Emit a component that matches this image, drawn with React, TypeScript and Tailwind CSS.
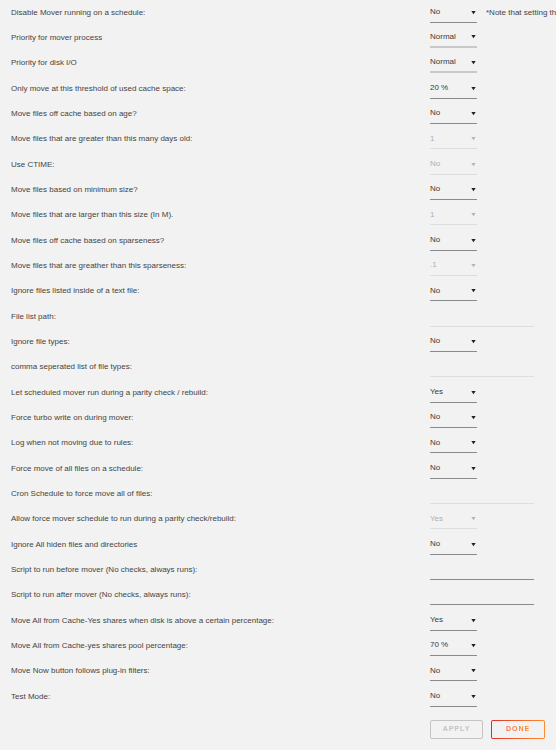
import React from "react";

type Row =
  | { label: string; kind: "select"; value: string; tone?: "dark" | "soft" | "off"; note?: string }
  | { label: string; kind: "input"; tone: "light" | "dark" };

const rows: Row[] = [
  { label: "Disable Mover running on a schedule:", kind: "select", value: "No", note: "*Note that setting this to Yes will stop the mover from running" },
  { label: "Priority for mover process", kind: "select", value: "Normal", tone: "soft" },
  { label: "Priority for disk I/O", kind: "select", value: "Normal", tone: "soft" },
  { label: "Only move at this threshold of used cache space:", kind: "select", value: "20 %" },
  { label: "Move files off cache based on age?", kind: "select", value: "No" },
  { label: "Move files that are greater than this many days old:", kind: "select", value: "1", tone: "off" },
  { label: "Use CTIME:", kind: "select", value: "No", tone: "off" },
  { label: "Move files based on minimum size?", kind: "select", value: "No" },
  { label: "Move files that are larger than this size (In M).", kind: "select", value: "1", tone: "off" },
  { label: "Move files off cache based on sparseness?", kind: "select", value: "No" },
  { label: "Move files that are greather than this sparseness:", kind: "select", value: ".1", tone: "off" },
  { label: "Ignore files listed inside of a text file:", kind: "select", value: "No" },
  { label: "File list path:", kind: "input", tone: "light" },
  { label: "Ignore file types:", kind: "select", value: "No" },
  { label: "comma seperated list of file types:", kind: "input", tone: "light" },
  { label: "Let scheduled mover run during a parity check / rebuild:", kind: "select", value: "Yes" },
  { label: "Force turbo write on during mover:", kind: "select", value: "No" },
  { label: "Log when not moving due to rules:", kind: "select", value: "No" },
  { label: "Force move of all files on a schedule:", kind: "select", value: "No" },
  { label: "Cron Schedule to force move all of files:", kind: "input", tone: "light" },
  { label: "Allow force mover schedule to run during a parity check/rebuild:", kind: "select", value: "Yes", tone: "off" },
  { label: "Ignore All hiden files and directories", kind: "select", value: "No" },
  { label: "Script to run before mover (No checks, always runs):", kind: "input", tone: "dark" },
  { label: "Script to run after mover (No checks, always runs):", kind: "input", tone: "dark" },
  { label: "Move All from Cache-Yes shares when disk is above a certain percentage:", kind: "select", value: "Yes" },
  { label: "Move All from Cache-yes shares pool percentage:", kind: "select", value: "70 %" },
  { label: "Move Now button follows plug-in filters:", kind: "select", value: "No" },
  { label: "Test Mode:", kind: "select", value: "No" },
];

const Caret = ({ off }: { off: boolean }) => (
  <svg width="5" height="5" viewBox="0 0 5 5" className="mr-[1px]">
    <path d="M0.3 1 L4.7 1 L2.5 4.3 Z" fill={off ? "#b5b5b5" : "#222"} />
  </svg>
);

function Select({ value, tone = "dark" }: { value: string; tone?: "dark" | "soft" | "off" }) {
  const off = tone === "off";
  const line =
    tone === "off"
      ? "border-b border-[#dedede]"
      : tone === "soft"
        ? "border-b-2 border-[#c9c9c9]"
        : "border-b border-[#8a8a8a]";
  return (
    <div className={`mt-[2px] flex h-[18px] w-[47px] items-center justify-between pb-[2px] ${line}`}>
      <span className={off ? "text-[#b0b0b0]" : "text-[#3a3a3a]"}>{value}</span>
      <Caret off={off} />
    </div>
  );
}

export default function App() {
  return (
    <div
      className="h-[750px] w-[556px] overflow-hidden bg-[#f2f2f2] text-[8px] text-[#444]"
      style={{ fontFamily: '"Liberation Sans", Arial, sans-serif' }}
    >
      <div className="flex flex-col">
        {rows.map((r) => (
          <div key={r.label} className="flex h-[25.33px] items-center">
            <div className="w-[430px] shrink-0 pl-[11px]">{r.label}</div>
            {r.kind === "select" ? (
              <div className="flex items-center">
                <Select value={r.value} tone={r.tone} />
                {r.note && <span className="ml-[9px] whitespace-nowrap text-[#444]">{r.note}</span>}
              </div>
            ) : (
              <div
                className={`mt-[5px] h-[15px] w-[104px] border-b ${
                  r.tone === "light" ? "border-[#dedede]" : "border-[#8a8a8a]"
                }`}
              />
            )}
          </div>
        ))}
      </div>
      <div className="mt-[11px] flex gap-[8px] pl-[430px]">
        <button className="h-[19px] w-[53px] rounded-[2px] border border-[#c4c4c4] text-[7px] font-bold tracking-[1px] text-[#c4c4c4]">
          APPLY
        </button>
        <div className="h-[19px] w-[54px] rounded-[2px] bg-gradient-to-r from-[#e22828] to-[#ff8b2f] p-[1px]">
          <button className="h-full w-full rounded-[1px] bg-[#f2f2f2] text-[7px] font-bold tracking-[1px]">
            <span className="bg-gradient-to-r from-[#ff6a3a] to-[#ff8b2f] bg-clip-text text-transparent">DONE</span>
          </button>
        </div>
      </div>
    </div>
  );
}
